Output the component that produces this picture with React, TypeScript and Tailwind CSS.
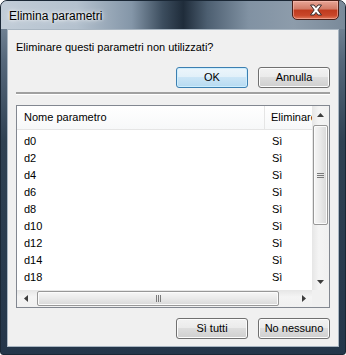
import React from "react";

const rows = ["d0", "d2", "d4", "d6", "d8", "d10", "d12", "d14", "d18", "d20"];

const font = { fontFamily: '"Liberation Sans", Arial, sans-serif' };

const Button = ({ label, primary }: { label: string; primary?: boolean }) => (
  <div
    className={`h-[21px] w-[72px] rounded-[3px] border flex items-center justify-center text-[11px] text-black ${
      primary
        ? "border-[#3c7fb1] shadow-[inset_0_0_0_1px_#cdeefe]"
        : "border-[#707070] shadow-[inset_0_0_0_1px_#fcfcfc]"
    }`}
    style={{
      background: primary
        ? "linear-gradient(to bottom, #ecf5fb 0%, #e2f0f9 45%, #cbe5f6 50%, #b6daf1 100%)"
        : "linear-gradient(to bottom, #f2f2f2 0%, #ebebeb 45%, #dddddd 50%, #cfcfcf 100%)",
    }}
  >
    {label}
  </div>
);

const Arrow = ({ dir }: { dir: "up" | "down" | "left" | "right" }) => {
  const pts = {
    up: "0,4 3.5,0 7,4",
    down: "0,0 7,0 3.5,4",
    left: "4,0 4,7 0,3.5",
    right: "0,0 4,3.5 0,7",
  }[dir];
  const vert = dir === "up" || dir === "down";
  return (
    <svg width={vert ? 7 : 4} height={vert ? 4 : 7} viewBox={vert ? "0 0 7 4" : "0 0 4 7"}>
      <polygon points={pts} fill="#3d3d3d" />
    </svg>
  );
};

export default function App() {
  return (
    <div className="w-[346px] h-[355px] bg-white" style={font}>
      <div
        className="relative w-full h-full flex flex-col rounded-t-[7px] rounded-b-[3px] border border-[#1a2735] px-[6px] pb-[7px]"
        style={{
          background:
            "linear-gradient(to bottom, #8696a6 0px, #55677a 60px, #2f4152 140px, #24364a 100%)",
        }}
      >
        {/* title bar */}
        <div
          className="-mx-[6px] h-[28px] rounded-t-[6px] flex items-center pl-[8px] shrink-0"
          style={{
            background:
              "linear-gradient(to right, #c2cdd8 0%, #b4c1ce 22%, #8496a8 38%, #3c4d5e 47%, #1f2c3a 53%, #4d5f71 60%, #8192a3 72%, #8d9cab 85%, #7a8a9a 100%)",
          }}
        >
          <span
            className="text-[12px] text-black mt-[2px]"
            style={{ textShadow: "0 0 6px #ffffff, 0 0 3px #ffffff" }}
          >
            Elimina parametri
          </span>
        </div>

        {/* close button */}
        <div
          className="absolute top-[-1px] left-[291px] w-[47px] h-[20px] rounded-b-[5px] border border-[#4a1f18] flex items-center justify-center shadow-[inset_0_0_0_1px_rgba(255,200,190,0.5)]"
          style={{
            background:
              "linear-gradient(to bottom, #e8a596 0%, #d27a66 45%, #bf3a1e 50%, #c9472a 80%, #e0785a 100%)",
          }}
        >
          <svg width="14" height="12" viewBox="0 0 14 12">
            <path
              d="M1.5 1 L5 1 L7 3.6 L9 1 L12.5 1 L8.8 6 L12.5 11 L9 11 L7 8.4 L5 11 L1.5 11 L5.2 6 Z"
              fill="#ffffff"
              stroke="#3b2a2a"
              strokeWidth="1"
              strokeLinejoin="round"
            />
          </svg>
        </div>

        {/* client area */}
        <div className="flex-1 border border-[#a9b6c2] bg-[#f0f0f0] flex flex-col px-[8px]">
          <div className="mt-[11px] text-[11px] text-black leading-[13px]">
            Eliminare questi parametri non utilizzati?
          </div>
          <div className="mt-[13px] flex justify-end gap-[10px]">
            <Button label="OK" primary />
            <Button label="Annulla" />
          </div>
          <div className="mt-[4px] h-[2px] bg-[#a0a0a0]" />
          <div className="h-[1px] bg-white" />

          {/* list */}
          <div className="mt-[10px] h-[203px] border border-[#828790] bg-white flex flex-col overflow-hidden">
            <div className="flex-1 flex min-h-0">
              <div className="flex-1 flex flex-col min-w-0 overflow-hidden">
                <div className="h-[24px] shrink-0 flex border-b border-[#e5e5e5] bg-[linear-gradient(to_bottom,#ffffff,#f7f8f9)] text-[11px] text-black">
                  <div className="w-[248px] shrink-0 pl-[7px] flex items-center border-r border-[#e5e5e5]">
                    Nome parametro
                  </div>
                  <div className="pl-[6px] flex items-center whitespace-nowrap">Eliminare</div>
                </div>
                <div className="pt-[3px] flex flex-col">
                  {rows.map((r) => (
                    <div key={r} className="h-[17px] shrink-0 flex items-center text-[11px] text-black">
                      <div className="w-[248px] shrink-0 pl-[7px]">{r}</div>
                      <div className="pl-[7px]">Sì</div>
                    </div>
                  ))}
                </div>
              </div>
              {/* vertical scrollbar */}
              <div className="w-[17px] shrink-0 flex flex-col bg-[linear-gradient(to_right,#e6e6e6,#f4f4f4_40%,#f0f0f0)]">
                <div className="h-[17px] flex items-center justify-center">
                  <Arrow dir="up" />
                </div>
                <div className="h-[2px]" />
                <div className="mx-[1px] h-[100px] rounded-[2px] border border-[#979797] bg-[linear-gradient(to_right,#f6f6f6,#e9e9e9_50%,#d8d8d8)] flex flex-col items-center justify-center gap-[1px] shadow-[inset_0_0_0_1px_#fbfbfb]">
                  <div className="w-[7px] h-[1px] bg-[#7a7a7a]" />
                  <div className="w-[7px] h-[1px] bg-[#7a7a7a]" />
                  <div className="w-[7px] h-[1px] bg-[#7a7a7a]" />
                </div>
                <div className="flex-1" />
                <div className="h-[17px] flex items-center justify-center">
                  <Arrow dir="down" />
                </div>
              </div>
            </div>
            {/* horizontal scrollbar */}
            <div className="h-[17px] shrink-0 flex">
              <div className="flex-1 flex bg-[linear-gradient(to_bottom,#e6e6e6,#f4f4f4_40%,#f0f0f0)]">
                <div className="w-[17px] flex items-center justify-center">
                  <Arrow dir="left" />
                </div>
                <div className="ml-[3px] my-[1px] w-[242px] rounded-[2px] border border-[#979797] bg-[linear-gradient(to_bottom,#f6f6f6,#e9e9e9_50%,#d8d8d8)] flex items-center justify-center gap-[1px] shadow-[inset_0_0_0_1px_#fbfbfb]">
                  <div className="w-[1px] h-[7px] bg-[#7a7a7a]" />
                  <div className="w-[1px] h-[7px] bg-[#7a7a7a]" />
                  <div className="w-[1px] h-[7px] bg-[#7a7a7a]" />
                </div>
                <div className="flex-1" />
                <div className="w-[17px] flex items-center justify-center">
                  <Arrow dir="right" />
                </div>
              </div>
              <div className="w-[17px] bg-[#f0f0f0]" />
            </div>
          </div>

          <div className="mt-[10px] flex justify-end gap-[10px]">
            <Button label="Sì tutti" />
            <Button label="No nessuno" />
          </div>
        </div>
      </div>
    </div>
  );
}
